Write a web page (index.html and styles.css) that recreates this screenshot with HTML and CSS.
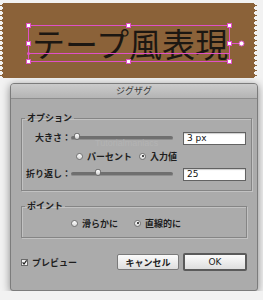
FILE: index.html
```html
<!DOCTYPE html>
<html lang="ja">
<head>
    <meta charset="UTF-8">
    <meta name="viewport" content="width=device-width, initial-scale=1.0">
    <title>ジグザグ</title>
    <link rel="stylesheet" href="styles.css">
</head>
<body>
    <div class="stage">
        <div class="tape">
            <span class="tape-text">テープ風表現</span>
        </div>
        <!-- 選択枠 -->
        <svg class="selection" width="263" height="80" viewBox="0 0 263 80">
            <g fill="none" stroke="#e050c8" stroke-width="1">
                <rect x="28.5" y="25.5" width="201" height="36"/>
                <line x1="28" y1="53.5" x2="229" y2="53.5"/>
                <line x1="230" y1="43.5" x2="239" y2="43.5"/>
            </g>
            <g fill="#fff" stroke="#e050c8" stroke-width="1">
                <rect x="26.5" y="23.5" width="4" height="4"/>
                <rect x="126.5" y="23.5" width="4" height="4"/>
                <rect x="227.5" y="23.5" width="4" height="4"/>
                <rect x="26.5" y="41.5" width="4" height="4"/>
                <rect x="227.5" y="41.5" width="4" height="4"/>
                <rect x="26.5" y="59.5" width="4" height="4"/>
                <rect x="126.5" y="59.5" width="4" height="4"/>
                <rect x="227.5" y="59.5" width="4" height="4"/>
                <circle cx="241.5" cy="43.5" r="2.5"/>
            </g>
            <circle cx="28.5" cy="53.5" r="1.5" fill="#e050c8"/>
        </svg>

        <div class="dialog">
            <div class="titlebar">ジグザグ</div>
            <div class="dialog-body">
                <fieldset class="group">
                    <legend>オプション</legend>
                    <div class="grid">
                        <span class="row-label">大きさ：</span>
                        <div class="slider"><span class="thumb" style="left: 3px"></span></div>
                        <div class="field">3 px</div>

                        <div class="radios">
                            <span class="radio-item"><span class="radio"></span>パーセント</span>
                            <span class="radio-item"><span class="radio checked"></span>入力値</span>
                        </div>

                        <span class="row-label">折り返し：</span>
                        <div class="slider"><span class="thumb" style="left: 24px"></span></div>
                        <div class="field">25</div>
                    </div>
                    <span class="watermark">Tutorialmaniacs</span>
                </fieldset>

                <fieldset class="group group-point">
                    <legend>ポイント</legend>
                    <div class="radios radios-point">
                        <span class="radio-item"><span class="radio"></span>滑らかに</span>
                        <span class="radio-item"><span class="radio checked"></span>直線的に</span>
                    </div>
                </fieldset>

                <div class="actions">
                    <span class="check">
                        <svg width="7" height="7" viewBox="0 0 7 7">
                            <rect x="0.5" y="0.5" width="6" height="6" fill="#f4f4f4" stroke="#6a6a6a"/>
                            <path d="M1.6 3.4 L3 5 L5.6 1.4" fill="none" stroke="#222" stroke-width="1.2"/>
                        </svg>
                        プレビュー
                    </span>
                    <button class="btn">キャンセル</button>
                    <button class="btn btn-default">OK</button>
                </div>
            </div>
        </div>
    </div>
</body>
</html>
```

FILE: styles.css
```css
body {
    margin: 0;
    background-color: #f2f2f2;
    font-family: "Noto Sans CJK JP", sans-serif;
}
.stage {
    position: relative;
    padding-top: 3px;
}
.tape {
    position: relative;
    width: 249px;
    height: 75px;
    margin-left: 4px;
    background-color: #8b6239;
}
.tape::before,
.tape::after {
    content: "";
    position: absolute;
    top: 0;
    bottom: 0;
    width: 4px;
}
.tape::before {
    left: -4px;
    background: conic-gradient(from 58deg at 0 50%, #8b6239 64deg, transparent 0) 0 0 / 4px 5px repeat-y;
}
.tape::after {
    right: -4px;
    background: conic-gradient(from 238deg at 100% 50%, #8b6239 64deg, transparent 0) 0 0 / 4px 5px repeat-y;
}
.tape-text {
    display: block;
    padding: 24px 0 0 28px;
    font-size: 33px;
    line-height: 33px;
    color: #1c1712;
    white-space: nowrap;
}
.selection {
    position: absolute;
    top: 0;
    left: 0;
    pointer-events: none;
}

.dialog {
    width: 246px;
    margin: 5px 0 0 10px;
    border: 1px solid #7c7c7c;
    border-radius: 4px 4px 3px 3px;
    background-color: #ababab;
    box-shadow: 0 2px 9px rgba(0, 0, 0, 0.45);
    font-size: 9px;
    font-weight: 700;
    color: #1e1e1e;
}
.titlebar {
    height: 14px;
    line-height: 14px;
    text-align: center;
    font-weight: 400;
    color: #3a3a3a;
    background: linear-gradient(#cbcbcb, #b4b4b4);
    border-bottom: 1px solid #8d8d8d;
    border-radius: 3px 3px 0 0;
}
.dialog-body {
    padding: 13px 10px 19px;
}
.group {
    position: relative;
    margin: 0;
    padding: 7px 5px 9px 0;
    border: 1px solid #858585;
    box-shadow: 1px 1px 0 #c2c2c2, inset 1px 1px 0 #c2c2c2;
}
.group legend {
    margin-left: 3px;
    padding: 0 2px;
    line-height: 12px;
}
.group-point {
    margin-top: 9px;
    padding: 4px 5px 7px 0;
}
.grid {
    display: grid;
    grid-template-columns: 49px 102px 63px;
    column-gap: 5px;
    row-gap: 4px;
    align-items: center;
}
.grid > * {
    height: 14px;
}
.row-label {
    text-align: right;
    line-height: 14px;
    white-space: nowrap;
}
.slider {
    position: relative;
    align-self: center;
    margin-left: -5px;
    width: 102px;
    height: 3px !important;
    background-color: #6f6f6f;
    border-bottom: 1px solid #8f8f8f;
    border-radius: 2px;
}
.thumb {
    position: absolute;
    top: -3px;
    width: 6px;
    height: 7px;
    box-sizing: border-box;
    border: 1px solid #707070;
    border-radius: 3px 3px 4px 4px;
    background: linear-gradient(#ffffff, #cfcfcf);
}
.field {
    box-sizing: border-box;
    height: 13px !important;
    padding-left: 3px;
    border: 1px solid #626262;
    background-color: #fff;
    box-shadow: inset 0 1px 1px rgba(0, 0, 0, 0.2);
    font-family: "DejaVu Sans", sans-serif;
    font-weight: 400;
    font-size: 9px;
    line-height: 11px;
    color: #111;
}
.radios {
    grid-column: 2 / 4;
    display: grid;
    grid-template-columns: 63px auto;
    align-items: center;
    height: 14px;
}
.radios-point {
    margin-left: 49px;
}
.radio-item {
    display: flex;
    align-items: center;
    gap: 4px;
    white-space: nowrap;
}
.radio {
    position: relative;
    width: 7px;
    height: 7px;
    box-sizing: border-box;
    border: 1px solid #737373;
    border-radius: 50%;
    background: linear-gradient(#ffffff, #d8d8d8);
}
.radio.checked::after {
    content: "";
    position: absolute;
    left: 1.5px;
    top: 1.5px;
    width: 2px;
    height: 2px;
    border-radius: 50%;
    background-color: #111;
}
.watermark {
    position: absolute;
    left: 73px;
    top: 15px;
    font-family: "Liberation Sans", sans-serif;
    font-weight: 400;
    font-size: 9px;
    line-height: 8px;
    color: #b3b3b3;
}
.actions {
    display: flex;
    align-items: center;
    margin-top: 15px;
    height: 18px;
}
.check {
    display: flex;
    align-items: center;
    gap: 4px;
    margin-right: auto;
}
.check svg {
    display: block;
}
.btn {
    height: 16px;
    width: 62px;
    padding: 0;
    border: 1px solid #7a7a7a;
    border-radius: 2px;
    background: linear-gradient(#fbfbfb, #dedede);
    font-family: "Noto Sans CJK JP", sans-serif;
    font-weight: 700;
    font-size: 9px;
    color: #1e1e1e;
}
.btn-default {
    height: 18px;
    width: 64px;
    margin-left: 4px;
    border: 2px solid #5a5a5a;
    font-family: "DejaVu Sans", sans-serif;
    font-weight: 400;
}
```
